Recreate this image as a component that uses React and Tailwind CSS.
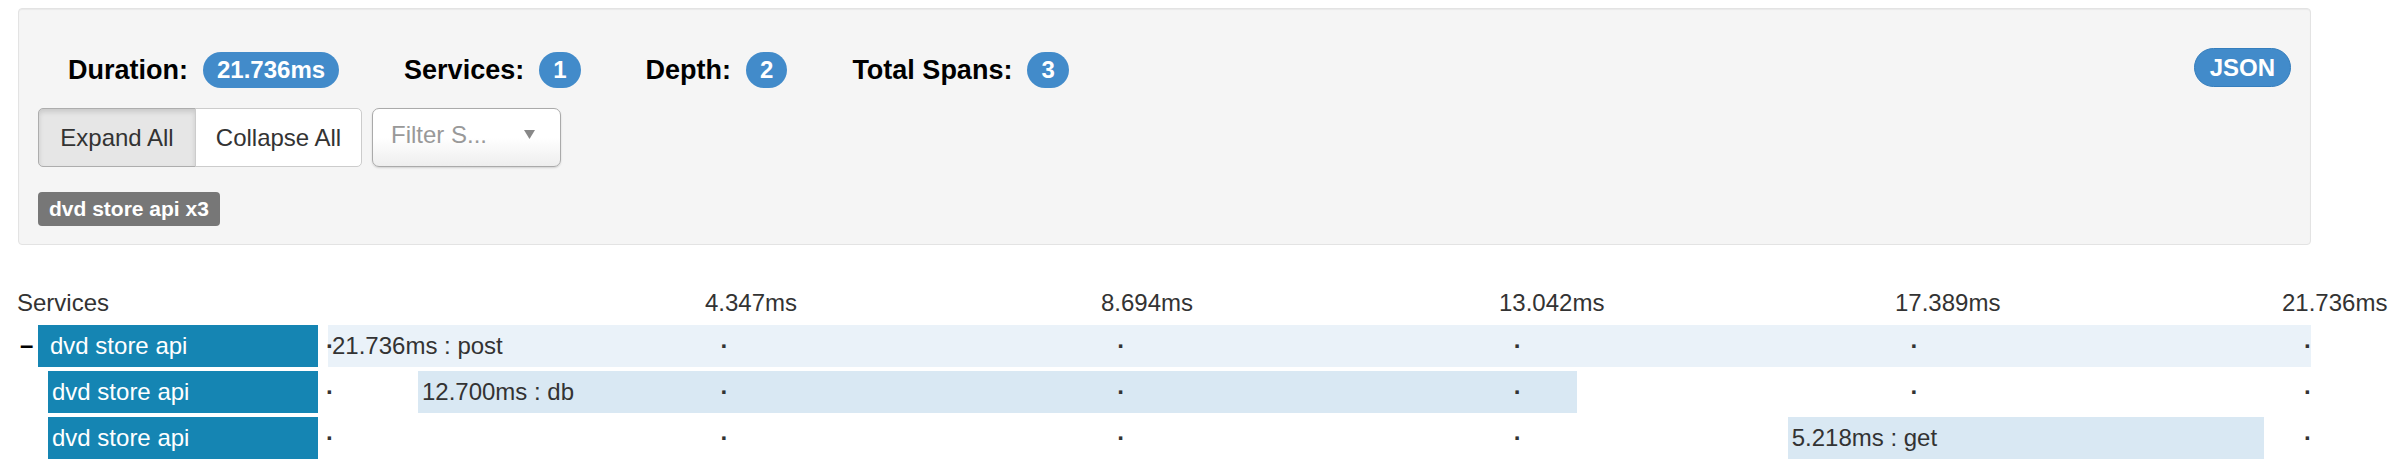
import React from "react";

const TOTAL = 21.736;
const W = 1983;

const ticks = [
  { label: "4.347ms", left: 377 },
  { label: "8.694ms", left: 773 },
  { label: "13.042ms", left: 1171 },
  { label: "17.389ms", left: 1567 },
  { label: "21.736ms", left: 1954 },
];

const dotCenters = [2, 396.6, 793.2, 1189.8, 1586.4, 1980];

const spans = [
  { start: 0, dur: 21.736, name: "post", depth: 0, bg: "bg-[#eaf2f9]", hide: [] },
  { start: 0.986, dur: 12.7, name: "db", depth: 1, bg: "bg-[#d9e8f3]", hide: [] },
  { start: 16.0, dur: 5.218, name: "get", depth: 1, bg: "bg-[#d9e8f3]", hide: [4] },
];

function Badge({ children }) {
  return (
    <span className="inline-flex h-[36px] items-center rounded-full bg-[#428bca] px-[14px] text-[24px] font-bold leading-[36px] text-white">
      {children}
    </span>
  );
}

function Stat({ label, value, first }) {
  return (
    <div className={`flex items-center gap-[15px] ${first ? "ml-[30px]" : "ml-[65px]"}`}>
      <span className="text-[27px] font-bold leading-[36px] text-black">{label}</span>
      <Badge>{value}</Badge>
    </div>
  );
}

function Row({ span }) {
  const leftPx = (span.start / TOTAL) * W;
  const widthPx = (span.dur / TOTAL) * W;
  return (
    <div className="flex h-[42px]">
      <div className="flex w-[311px] pr-[10px]">
        {span.depth === 0 ? (
          <>
            <span className="w-[21px] pl-[3px] text-[24px] font-bold leading-[40px] text-black">–</span>
            <div className="w-[280px] bg-[#1585b3] pl-[12px] text-[24px] leading-[42px] text-white">dvd store api</div>
          </>
        ) : (
          <div className="ml-[31px] w-[270px] bg-[#1585b3] pl-[4px] text-[24px] leading-[42px] text-white">dvd store api</div>
        )}
      </div>
      <div className="relative h-[42px] w-[1983px]">
        <div
          className={`absolute top-0 bottom-0 ${span.bg} whitespace-nowrap pl-[4px] text-[24px] leading-[42px] text-[#333]`}
          style={{ left: `${leftPx}px`, width: `${widthPx}px` }}
        >
          {span.dur.toFixed(3)}ms : {span.name}
        </div>
        {dotCenters.map((c, i) =>
          span.hide.includes(i) ? null : (
            <span
              key={i}
              className="absolute top-0 -translate-x-1/2 text-[24px] font-bold leading-[42px] text-[#333]"
              style={{ left: `${c}px` }}
            >
              ·
            </span>
          )
        )}
      </div>
    </div>
  );
}

export default function App() {
  return (
    <div className="w-[2408px] bg-white pl-[17px] pt-[8px] font-['Liberation_Sans',Arial,sans-serif]">
      <div className="ml-[1px] w-[2293px] rounded-[4px] border border-[#e3e3e3] bg-[#f5f5f5] px-[19px] pt-[39px] pb-[18px] shadow-[inset_0_1px_1px_rgba(0,0,0,0.05)]">
        <div className="flex h-[42px] items-start justify-between">
          <div className="flex items-center pt-[4px]">
            <Stat first label="Duration:" value="21.736ms" />
            <Stat label="Services:" value="1" />
            <Stat label="Depth:" value="2" />
            <Stat label="Total Spans:" value="3" />
          </div>
          <button className="h-[39px] rounded-full border border-[#357ebd] bg-[#428bca] px-[15px] text-[24px] font-bold leading-[37px] text-white">
            JSON
          </button>
        </div>
        <div className="mt-[18px] flex gap-[10px]">
          <div className="flex h-[59px]">
            <button className="w-[158px] rounded-l-[5px] border border-[#adadad] bg-[#e6e6e6] text-[24px] text-[#333] shadow-[inset_0_3px_5px_rgba(0,0,0,0.125)]">
              Expand All
            </button>
            <button className="-ml-px w-[167px] rounded-r-[5px] border border-[#cccccc] bg-white text-[24px] text-[#333]">
              Collapse All
            </button>
          </div>
          <div className="flex h-[59px] w-[189px] items-center justify-between rounded-[7px] border border-[#aaaaaa] bg-gradient-to-b from-white from-50% to-[#eeeeee] pb-[6px] pl-[18px] pr-[25px] shadow-[0_1px_2px_rgba(0,0,0,0.15)]">
            <span className="text-[24px] text-[#999]">Filter S...</span>
            <svg width="11" height="9" viewBox="0 0 11 9">
              <path d="M0 0 L11 0 L5.5 9 Z" fill="#888" />
            </svg>
          </div>
        </div>
        <div className="mt-[25px] flex">
          <span className="h-[34px] rounded-[4px] bg-[#777777] px-[11px] text-[21px] font-bold leading-[34px] text-white">
            dvd store api x3
          </span>
        </div>
      </div>

      <div className="mt-[43px]">
        <div className="flex h-[30px] text-[24px] leading-[30px] text-[#333]">
          <div className="w-[311px]">Services</div>
          <div className="relative w-[1983px]">
            {ticks.map((t) => (
              <span key={t.label} className="absolute top-0 whitespace-nowrap" style={{ left: `${t.left}px` }}>
                {t.label}
              </span>
            ))}
          </div>
        </div>
        <div className="mt-[7px] flex flex-col gap-[4px]">
          {spans.map((s, i) => (
            <Row key={i} span={s} />
          ))}
        </div>
      </div>
    </div>
  );
}
